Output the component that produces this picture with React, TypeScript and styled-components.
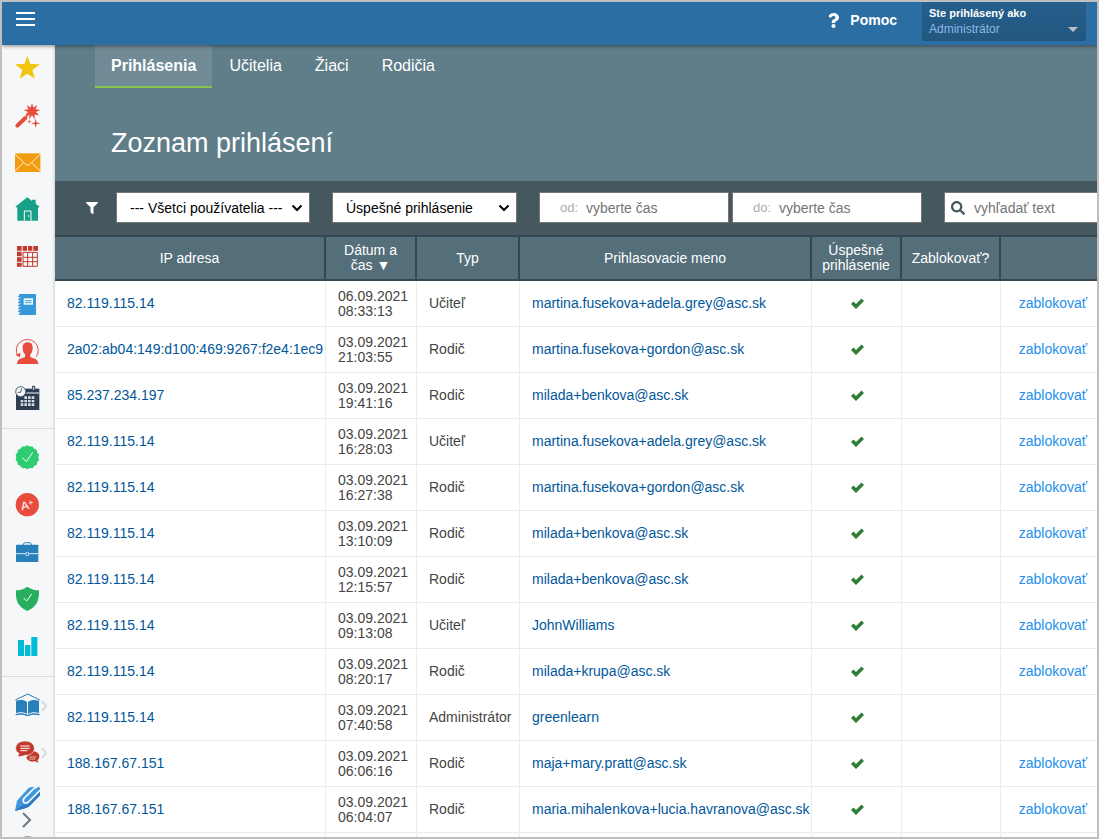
import React from "react";
import styled, { createGlobalStyle } from "styled-components";
import { FaFilter, FaQuestion, FaSearch } from "react-icons/fa";

const GlobalStyle = createGlobalStyle`
  *, *::before, *::after { box-sizing: border-box; }
  body { margin: 0; background: #fff; }
  body, button, input, select, table {
    font-family: "Liberation Sans", Arial, sans-serif;
    font-size: 14px;
  }
  a { text-decoration: none; }
`;

const Frame = styled.div`
  height: 100vh;
  display: flex;
  flex-direction: column;
  border: 2px solid #bfbfbf;
  overflow: hidden;
`;

const TopBar = styled.header`
  position: relative;
  z-index: 2;
  flex: none;
  height: 43px;
  display: flex;
  align-items: flex-start;
  background: #2b6ea4;
  box-shadow: 0 1px 4px rgba(0, 0, 0, 0.45);
`;

const MenuButton = styled.button`
  display: flex;
  flex-direction: column;
  gap: 4px;
  margin: 10px auto 0 14px;
  padding: 0;
  border: 0;
  background: none;
`;

const MenuLine = styled.span`
  width: 19px;
  height: 2px;
  background: #fff;
`;

const HelpLink = styled.a`
  display: flex;
  align-items: center;
  gap: 9px;
  height: 36px;
  margin-right: 25px;
  color: #fff;
  font-weight: bold;
`;

const UserButton = styled.button`
  display: flex;
  justify-content: space-between;
  align-items: flex-end;
  width: 164px;
  height: 39px;
  margin-right: 11px;
  padding: 3px 8px 4px 7px;
  border: 0;
  border-radius: 0 0 2px 2px;
  background: linear-gradient(#265f8c, #22577f);
  color: #8fb8e6;
  text-align: left;
`;

const UserText = styled.span`
  font-size: 12px;
  line-height: 16px;
`;

const UserCaption = styled.strong`
  display: block;
  color: #fff;
  font-size: 11px;
`;

const Caret = styled.span`
  margin-bottom: 5px;
  border: 5px solid transparent;
  border-top-color: #b9bfc4;
  border-bottom: 0;
`;

const Body = styled.div`
  flex: 1;
  min-height: 0;
  display: flex;
`;

const Sidebar = styled.nav`
  position: relative;
  flex: none;
  width: 53px;
  border-right: 1px solid #dcdfe1;
  background: #f5f7f9;
  box-shadow: inset -2px 0 2px -1px rgba(0, 0, 0, 0.08);
  overflow: hidden;
`;

const SideItem = styled.a`
  position: relative;
  display: flex;
  justify-content: center;
  height: 47px;
  padding-top: 10px;
`;

const SideDivider = styled.hr`
  height: 1px;
  margin: 7px 0 5px;
  border: 0;
  background: #d9dbdd;
`;

const Icon = styled.svg`
  display: block;
  width: 26px;
  height: 26px;
  overflow: visible;
`;

const Submenu = styled.svg`
  position: absolute;
  right: 7px;
  top: 19px;
  width: 6px;
  height: 10px;
`;

const ScrollButton = styled.button`
  position: absolute;
  left: 20px;
  bottom: 9px;
  display: flex;
  padding: 0;
  border: 0;
  background: none;
`;

const Content = styled.main`
  flex: 1;
  min-width: 0;
  overflow: hidden;
  background: #fff;
`;

const Hero = styled.section`
  height: 136px;
  padding-left: 40px;
  background: #607d8a;
`;

const Tabs = styled.nav`
  display: flex;
  gap: 1px;
`;

const Tab = styled.a<{ $active?: boolean }>`
  height: 43px;
  padding: 0 16px;
  border-bottom: 2px solid ${(p) => (p.$active ? "#8bc34a" : "transparent")};
  background: ${(p) => (p.$active ? "#708a96" : "none")};
  color: #fff;
  font-size: 16px;
  font-weight: ${(p) => (p.$active ? "bold" : "normal")};
  line-height: 41px;
`;

const Title = styled.h1`
  margin: 39px 0 0 16px;
  color: #fff;
  font-size: 27px;
  font-weight: normal;
  line-height: 32px;
`;

const FilterBar = styled.form`
  display: flex;
  align-items: center;
  height: 54px;
  padding: 0 0 1px 31px;
  background: #455860;
  color: #fff;
`;

const SelectBox = styled.div<{ $width: number }>`
  position: relative;
  flex: none;
  width: ${(p) => p.$width}px;
  margin-right: 22px;
`;

const Select = styled.select`
  display: block;
  appearance: none;
  width: 100%;
  height: 31px;
  padding: 0 22px 0 13px;
  border: 1px solid #767676;
  border-radius: 0;
  background: #fff;
  color: #000;
`;

const SelectArrow = styled.svg`
  position: absolute;
  right: 7px;
  top: 12px;
  width: 12px;
  height: 8px;
  pointer-events: none;
`;

const Field = styled.label<{ $width?: number }>`
  flex: ${(p) => (p.$width ? "none" : "1")};
  width: ${(p) => (p.$width ? p.$width + "px" : "auto")};
  min-width: 0;
  height: 31px;
  display: flex;
  align-items: center;
  border: 1px solid #767676;
  border-right-width: ${(p) => (p.$width ? 1 : 0)}px;
  background: #fff;
  color: #455860;
`;

const FieldCaption = styled.span`
  width: 46px;
  padding-right: 8px;
  color: #a9adb0;
  font-size: 13px;
  text-align: right;
`;

const TextInput = styled.input`
  flex: 1;
  min-width: 0;
  padding: 0;
  border: 0;
  outline: 0;
  background: none;
  &::placeholder { color: #757575; opacity: 1; }
`;

const FilterIcon = styled.span`
  display: flex;
  width: 30px;
`;

const SearchIcon = styled.span`
  display: flex;
  width: 29px;
  padding-left: 6px;
`;

const FieldPair = styled.div`
  display: flex;
  gap: 3px;
  margin-right: 22px;
`;

const Table = styled.table`
  width: 100%;
  table-layout: fixed;
  border-collapse: separate;
  border-spacing: 0;
  line-height: 15px;
`;

const Col = styled.col<{ $width?: number }>`
  width: ${(p) => (p.$width ? p.$width + "px" : "auto")};
`;

const Head = styled.th`
  height: 46px;
  padding: 0 8px;
  border: 2px solid #37474f;
  border-left: 0;
  background: #546e7a;
  color: #fff;
  font-weight: normal;
  &:last-child { border-right: 0; }
`;

const Cell = styled.td<{ $align?: "center" | "right" }>`
  height: 46px;
  padding: 0 10px 0 12px;
  border-right: 1px solid #ebebeb;
  border-bottom: 1px solid #ebebeb;
  color: #444;
  text-align: ${(p) => p.$align || "left"};
  white-space: nowrap;
  &:last-child { border-right: 0; }
`;

const CheckMark = styled.svg`
  display: block;
  width: 13px;
  height: 11px;
  margin: 0 auto;
`;

const DataLink = styled.a<{ $action?: boolean }>`
  color: ${(p) => (p.$action ? "#2490ec" : "#01579b")};
`;

type Login = [ip: string, date: string, time: string, type: string, name: string, blockable: boolean];

const logins: Login[] = [
  ["82.119.115.14", "06.09.2021", "08:33:13", "Učiteľ", "martina.fusekova+adela.grey@asc.sk", true],
  ["2a02:ab04:149:d100:469:9267:f2e4:1ec9", "03.09.2021", "21:03:55", "Rodič", "martina.fusekova+gordon@asc.sk", true],
  ["85.237.234.197", "03.09.2021", "19:41:16", "Rodič", "milada+benkova@asc.sk", true],
  ["82.119.115.14", "03.09.2021", "16:28:03", "Učiteľ", "martina.fusekova+adela.grey@asc.sk", true],
  ["82.119.115.14", "03.09.2021", "16:27:38", "Rodič", "martina.fusekova+gordon@asc.sk", true],
  ["82.119.115.14", "03.09.2021", "13:10:09", "Rodič", "milada+benkova@asc.sk", true],
  ["82.119.115.14", "03.09.2021", "12:15:57", "Rodič", "milada+benkova@asc.sk", true],
  ["82.119.115.14", "03.09.2021", "09:13:08", "Učiteľ", "JohnWilliams", true],
  ["82.119.115.14", "03.09.2021", "08:20:17", "Rodič", "milada+krupa@asc.sk", true],
  ["82.119.115.14", "03.09.2021", "07:40:58", "Administrátor", "greenlearn", false],
  ["188.167.67.151", "03.09.2021", "06:06:16", "Rodič", "maja+mary.pratt@asc.sk", true],
  ["188.167.67.151", "03.09.2021", "06:04:07", "Rodič", "maria.mihalenkova+lucia.havranova@asc.sk", true],
];

/* Points of a regular star or scalloped outline, for use in <polygon>. */
const burst = (cx: number, cy: number, outer: number, inner: number, tips: number) =>
  Array.from({ length: tips * 2 }, (_, i) => {
    const r = i % 2 ? inner : outer;
    const a = (Math.PI * i) / tips - Math.PI / 2;
    return `${(cx + r * Math.cos(a)).toFixed(1)},${(cy + r * Math.sin(a)).toFixed(1)}`;
  }).join(" ");

const paper = "#f5f7f9";

const mainIcons: [string, React.ReactNode][] = [
  ["Obľúbené", <polygon fill="#f1c40f" points="37,3 46,27 75,28 52,45 60,71 37,56 14,71 22,45 0,28 28,27" />],
  ["Sprievodca", (
    <g fill="#e74c3c">
      <polygon points={burst(51, 28, 25, 12, 9)} />
      <path d="M7 71 36 43" stroke={paper} strokeWidth="16" />
      <path d="M7 71 31 48" stroke="#e74c3c" strokeWidth="12" strokeLinecap="round" />
      <path d="M34 43 41 36" stroke="#e74c3c" strokeWidth="5" />
      <polygon points={burst(62, 64, 14, 4, 4)} />
      <polygon points={burst(43, 59, 7, 2, 4)} />
    </g>
  )],
  ["Správy", (
    <g fill="none" stroke="#fff1d6" strokeWidth="3">
      <rect x="0" y="13" width="76" height="56" fill="#f39c12" stroke="none" />
      <path d="M0 15 29 43Q38 54 47 43L76 15M0 66 25 42M76 66 51 42" />
    </g>
  )],
  ["Domov", (
    <g>
      <path fill="#16a085" d="M37 4 51 15V11H62V23L74 32 69 35V74H7V35L1 32Z" />
      <path fill="none" stroke="#fff" strokeWidth="3" d="M28 74V45H48V74" />
      <rect x="39" y="58" width="4" height="4" fill="#fff" />
    </g>
  )],
  ["Rozvrh", (
    <g>
      <path fill="#c0392b" d="M6 9H20V23H6ZM23 9H36V23H23ZM39 9H52V23H39ZM55 9H69V23H55ZM6 26H20V40H6ZM6 43H20V56H6ZM6 59H20V71H6Z" />
      <path fill="none" stroke="#c0392b" strokeWidth="3" d="M24 28H67V70H24ZM38 28V70M53 28V70M24 43H67M24 56H67" />
    </g>
  )],
  ["Triedna kniha", (
    <g>
      <rect x="12" y="12" width="51" height="63" rx="3" fill="#3498db" />
      <rect x="26" y="25" width="28" height="19" fill="#fff" />
      <path d="M30 32H50M30 38H50" stroke="#3498db" strokeWidth="3" />
      <path d="M10 23H17M10 32H17M10 41H17M10 50H17M10 59H17M10 67H17" stroke={paper} strokeWidth="2" />
      <path d="M9 20H13M9 29H13M9 38H13M9 47H13M9 56H13M9 64H13" stroke="#3498db" strokeWidth="3" />
    </g>
  )],
  ["Používatelia", (
    <g fill="#e74c3c">
      <path d="M38 16C48 16 54 23 53 34 53 43 50 49 46 52V60C53 65 69 63 70 81H6C7 63 23 65 30 60V52C26 49 23 43 23 34 22 23 28 16 38 16Z" />
      <path fill="none" stroke="#e74c3c" strokeWidth="3" d="M64 59A33 33 0 1 0 9 58" />
      <path d="M2 54 15 61 16 47Z" />
    </g>
  )],
  ["Kalendár", (
    <g>
      <path fill="#2c3e50" d="M3 14H73V78H3Z" />
      <path stroke="#a4adb6" strokeWidth="5" d="M34 27H73" />
      <rect x="53" y="7" width="6" height="12" fill={paper} stroke="#2c3e50" strokeWidth="3" />
      <circle cx="17" cy="23" r="15" fill={paper} stroke="#53616f" strokeWidth="3" />
      <path fill="none" stroke="#53616f" strokeWidth="3" d="M20 13 17 25 8 25" />
      <path fill="#d5dadf" d="M28 37H36V45H28ZM39 37H47V45H39ZM50 37H58V45H50ZM17 48H25V55H17ZM28 48H36V55H28ZM39 48H47V55H39ZM50 48H58V55H50ZM17 58H25V66H17ZM28 58H36V66H28ZM39 58H47V66H39ZM50 58H58V66H50Z" />
    </g>
  )],
];

const moduleIcons: [string, React.ReactNode][] = [
  ["Dochádzka", (
    <g>
      <polygon points={burst(37, 40, 36, 33, 14)} fill="#2ecc71" />
      <path fill="none" stroke="#fff" strokeWidth="3" d="M22 41 34 53 53 25" />
    </g>
  )],
  ["Známky", (
    <g>
      <circle cx="37" cy="41" r="35" fill="#e74c3c" />
      <text x="17" y="55" fill="#fff" fontSize="36" transform="rotate(-12 37 41)">A<tspan fontSize="26" dy="-9">+</tspan></text>
    </g>
  )],
  ["Agenda", (
    <g>
      <path fill="none" stroke="#2980b9" strokeWidth="3" d="M24 22Q25 14 31 14H43Q49 14 50 22" />
      <rect x="3" y="20" width="67" height="52" rx="2" fill="#2980b9" />
      <path stroke="#d8eaf6" strokeWidth="3" d="M3 47H70" />
      <circle cx="37" cy="48" r="5" fill="#2980b9" stroke="#d8eaf6" strokeWidth="3" />
    </g>
  )],
  ["Bezpečnosť", (
    <g>
      <path fill="#27ae60" d="M37 5Q52 16 72 16C73 47 65 66 37 78 9 66 1 47 3 16Q22 16 37 5Z" />
      <path fill="none" stroke="#fff" strokeWidth="3" d="M26 39 35 48 50 27" />
    </g>
  )],
  ["Štatistiky", <path fill="#00bcd4" d="M9 24H27V72H9ZM30 39H46V72H30ZM49 15H67V72H49Z" />],
];

const moreIcons: [string, React.ReactNode][] = [
  ["Vzdelávanie", (
    <g>
      <path fill="none" stroke="#2980b9" strokeWidth="3" d="M1 24 38 6 75 24" />
      <path fill="#2980b9" d="M3 26C14 23 28 23 36 30V66C27 60 14 60 3 63ZM39 30C47 23 61 23 72 26V63C61 60 48 60 39 66ZM2 66C15 63 27 63 38 69 48 63 60 63 74 66V70C60 67 48 68 41 72H34C27 68 15 67 2 70Z" />
    </g>
  )],
  ["Komunikácia", (
    <g>
      <path fill="#c0392b" d="M53 37C65 37 73 44 73 52 73 57 71 61 67 64L71 71 60 67C45 70 35 63 34 55Z" />
      <path fill="none" stroke={paper} strokeWidth="2" d="M43 54H64M43 60H61" />
      <path fill="#c0392b" stroke={paper} strokeWidth="2" d="M30 6C46 6 58 15 58 28 58 41 46 50 30 49 24 51 18 53 8 53L12 43C5 40 2 34 2 28 2 15 14 6 30 6Z" />
      <path stroke="#fff" strokeWidth="3" d="M16 21H44M16 28H44M16 35H37" />
    </g>
  )],
  ["Písanie", (
    <g>
      <path fill="#3f96dc" d="M0 75 6 44 40 7Q46 2 56 3L72 2 75 6V28L44 60Q38 66 30 67Z" />
      <path fill="#2b79c2" d="M0 75 22 58 40 54 75 19V28L44 60Q38 66 30 67Z" />
      <path fill="none" stroke={paper} strokeWidth="5" d="M60 4 27 37Q22 44 27 50 33 54 40 48L76 12" />
      <path fill={paper} d="M59 0 71 1 64 8 57 6Z" />
    </g>
  )],
  ["Nastavenia", <circle cx="38" cy="39" r="30" fill="#95a5a6" />],
];

function IconLinks({ items, submenus = 0 }: { items: [string, React.ReactNode][]; submenus?: number }) {
  return (
    <>
      {items.map(([label, drawing], i) => (
        <SideItem key={label} href="#" aria-label={label}>
          <Icon viewBox="0 0 78 78">{drawing}</Icon>
          {i < submenus && (
            <Submenu viewBox="0 0 6 10">
              <path d="M1 0 5 5 1 10" fill="none" stroke="#d6d9dc" strokeWidth="2" />
            </Submenu>
          )}
        </SideItem>
      ))}
    </>
  );
}

function FilterSelect({ width, label, option }: { width: number; label: string; option: string }) {
  return (
    <SelectBox $width={width}>
      <Select aria-label={label}>
        <option>{option}</option>
      </Select>
      <SelectArrow viewBox="0 0 12 8">
        <path d="M1.5 1.5 6 6 10.500 1.5" fill="none" stroke="#000" strokeWidth="2" />
      </SelectArrow>
    </SelectBox>
  );
}

export default function App() {
  return (
    <Frame>
      <GlobalStyle />
      <TopBar>
        <MenuButton aria-label="Menu">
          <MenuLine />
          <MenuLine />
          <MenuLine />
        </MenuButton>
        <HelpLink href="#">
          <FaQuestion size={15} />
          Pomoc
        </HelpLink>
        <UserButton>
          <UserText>
            <UserCaption>Ste prihlásený ako</UserCaption>
            Administrátor
          </UserText>
          <Caret />
        </UserButton>
      </TopBar>
      <Body>
        <Sidebar>
          <IconLinks items={mainIcons} />
          <SideDivider />
          <IconLinks items={moduleIcons} />
          <SideDivider />
          <IconLinks items={moreIcons} submenus={2} />
          <ScrollButton aria-label="Ďalej">
            <svg width="10" height="16" viewBox="0 0 10 16">
              <path d="M1 1 8 8 1 15" fill="none" stroke="#6c7780" strokeWidth="2" />
            </svg>
          </ScrollButton>
        </Sidebar>
        <Content>
          <Hero>
            <Tabs>
              <Tab href="#" $active>Prihlásenia</Tab>
              <Tab href="#">Učitelia</Tab>
              <Tab href="#">Žiaci</Tab>
              <Tab href="#">Rodičia</Tab>
            </Tabs>
            <Title>Zoznam prihlásení</Title>
          </Hero>
          <FilterBar>
            <FilterIcon><FaFilter size={12} /></FilterIcon>
            <FilterSelect width={194} label="Používateľ" option="--- Všetci používatelia ---" />
            <FilterSelect width={185} label="Výsledok prihlásenia" option="Úspešné prihlásenie" />
            <FieldPair>
              <Field $width={190}>
                <FieldCaption>od:</FieldCaption>
                <TextInput placeholder="vyberte čas" />
              </Field>
              <Field $width={190}>
                <FieldCaption>do:</FieldCaption>
                <TextInput placeholder="vyberte čas" />
              </Field>
            </FieldPair>
            <Field>
              <SearchIcon><FaSearch size={14} /></SearchIcon>
              <TextInput placeholder="vyhľadať text" aria-label="Hľadať" />
            </Field>
          </FilterBar>
          <Table>
            <colgroup>
              <Col $width={271} />
              <Col $width={91} />
              <Col $width={103} />
              <Col />
              <Col $width={90} />
              <Col $width={99} />
              <Col $width={96} />
            </colgroup>
            <thead>
              <tr>
                <Head>IP adresa</Head>
                <Head>Dátum a<br />čas ▼</Head>
                <Head>Typ</Head>
                <Head>Prihlasovacie meno</Head>
                <Head>Úspešné prihlásenie</Head>
                <Head>Zablokovať?</Head>
                <Head />
              </tr>
            </thead>
            <tbody>
              {logins.map(([ip, date, time, type, name, blockable]) => (
                <tr key={date + time}>
                  <Cell><DataLink href="#">{ip}</DataLink></Cell>
                  <Cell>{date}<br />{time}</Cell>
                  <Cell>{type}</Cell>
                  <Cell><DataLink href="#">{name}</DataLink></Cell>
                  <Cell $align="center">
                    <CheckMark viewBox="0 0 13 11" role="img" aria-label="áno">
                      <path d="M0 6 2.500 3.500 5 6 10.500 0.500 13 3 5 11Z" fill="#2e7d32" />
                    </CheckMark>
                  </Cell>
                  <Cell />
                  <Cell $align="right">
                    {blockable && <DataLink href="#" $action>zablokovať</DataLink>}
                  </Cell>
                </tr>
              ))}
              <tr>
                <Cell /><Cell /><Cell /><Cell /><Cell /><Cell /><Cell />
              </tr>
            </tbody>
          </Table>
        </Content>
      </Body>
    </Frame>
  );
}
